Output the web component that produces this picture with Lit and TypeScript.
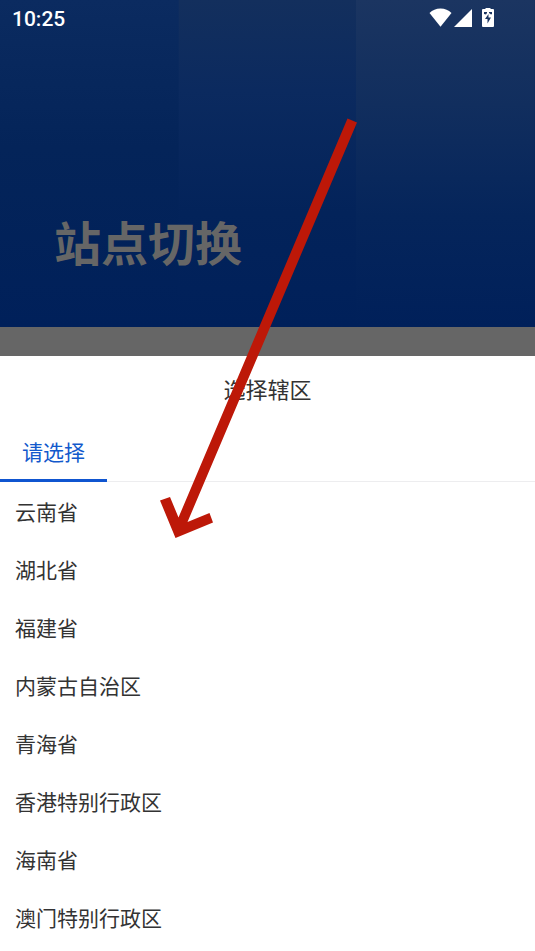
import { LitElement, html, css } from "lit";
import { customElement, property, state } from "lit/decorators.js";

const REGIONS = [
  "云南省",
  "湖北省",
  "福建省",
  "内蒙古自治区",
  "青海省",
  "香港特别行政区",
  "海南省",
  "澳门特别行政区",
];

@customElement("status-bar")
export class StatusBar extends LitElement {
  static styles = css`
    :host {
      display: flex;
      justify-content: space-between;
      align-items: center;
      height: 36px;
      padding: 0 41px 0 12px;
      color: #fff;
      font: 500 21px/36px Roboto, sans-serif;
    }
    time {
      padding-top: 2px;
    }
    .icons {
      display: flex;
      align-items: center;
      gap: 2px;
    }
    .battery {
      margin-left: 8px;
    }
    svg {
      display: block;
      fill: currentColor;
    }
  `;

  render() {
    return html`
      <time>10:25</time>
      <div class="icons">
        <svg width="23" height="20" viewBox="0 0 23 20" role="img" aria-label="Wi-Fi">
          <path d="M0.500 5C3.500 2 7 0.500 11.500 0.500S19.500 2 22.500 5L11.500 18.800z" />
        </svg>
        <svg width="18" height="20" viewBox="0 0 18 20" role="img" aria-label="信号">
          <path d="M18 1V19H0z" />
        </svg>
        <svg class="battery" width="12" height="20" viewBox="0 0 12 20" role="img" aria-label="电池">
          <path
            fill-rule="evenodd"
            d="M3.500 0H8.500V1H11Q12 1 12 2V18Q12 19 11 19H1Q0 19 0 18V2Q0 1 1 1H3.500zM2 4V6L4 6.500L5 5V4zM7 4V5L9 6.500L10 6V4zM6.500 6L3 11H5.500V15.500L9 9.500H6.500z"
          />
        </svg>
      </div>
    `;
  }
}

@customElement("region-picker")
export class RegionPicker extends LitElement {
  @property({ type: Array }) regions: string[] = [];
  @state() private selected = "";

  static styles = css`
    :host {
      display: block;
      background: #fff;
      color: #333;
    }
    h2 {
      margin: 0;
      padding-bottom: 4px;
      font-size: 22px;
      line-height: 64px;
      font-weight: 400;
      text-align: center;
    }
    button {
      border: 0;
      margin: 0;
      background: none;
      font: inherit;
      color: inherit;
      cursor: pointer;
    }
    .tabs {
      display: flex;
      border-bottom: 1px solid #ededef;
    }
    .tab {
      height: 58px;
      padding: 0 22px;
      margin-bottom: -1px;
      border-bottom: 3px solid #0f55d0;
      color: #1259cc;
      font-size: 21px;
      line-height: 55px;
    }
    .list {
      margin: 0;
      padding: 0;
      list-style: none;
    }
    .option {
      display: block;
      width: 100%;
      padding: 0 15px;
      font-size: 21px;
      line-height: 58px;
      text-align: left;
    }
  `;

  render() {
    return html`
      <h2>选择辖区</h2>
      <div class="tabs" role="tablist">
        <button class="tab" role="tab" aria-selected="true">请选择</button>
      </div>
      <ul class="list">
        ${this.regions.map(
          (name) => html`<li>
            <button
              class="option"
              aria-pressed=${this.selected === name ? "true" : "false"}
              @click=${() => (this.selected = name)}
            >${name}</button>
          </li>`
        )}
      </ul>
    `;
  }
}

@customElement("app-root")
export class AppRoot extends LitElement {
  static styles = css`
    :host {
      display: flex;
      flex-direction: column;
      position: relative;
      min-height: 100vh;
      background: #666;
      font-family: "Noto Sans CJK SC", sans-serif;
    }
    .hero {
      box-sizing: border-box;
      min-height: 327px;
      margin-bottom: 29px;
      background:
        linear-gradient(#0b2b60, #042459 45%, #00205a) left / 33.4% 100% no-repeat,
        linear-gradient(#1b3561, #112e5e 32%, #05255b 66%, #00205a) right / 33.4% 100% no-repeat,
        linear-gradient(#132f5d, #0b2a5f 28%, #03235a 65%, #00205a);
    }
    h1 {
      margin: 0;
      padding: 170px 54px 0;
      color: #666;
      font-size: 47px;
      line-height: 70px;
      font-weight: 700;
    }
    region-picker {
      flex: 1;
    }
    .arrow {
      position: absolute;
      top: 118px;
      left: 160px;
      fill: #bd1808;
      pointer-events: none;
    }
  `;

  render() {
    return html`
      <header class="hero">
        <status-bar></status-bar>
        <h1>站点切换</h1>
      </header>
      <region-picker .regions=${REGIONS}></region-picker>
      <svg class="arrow" width="198" height="422" viewBox="0 0 198 422" aria-hidden="true">
        <path d="M187.500 0.500L197 4.500L27.500 404L49.500 395L53 404.500L15.500 420L0 382.500L10 379L18.500 399.500z" />
      </svg>
    `;
  }
}
